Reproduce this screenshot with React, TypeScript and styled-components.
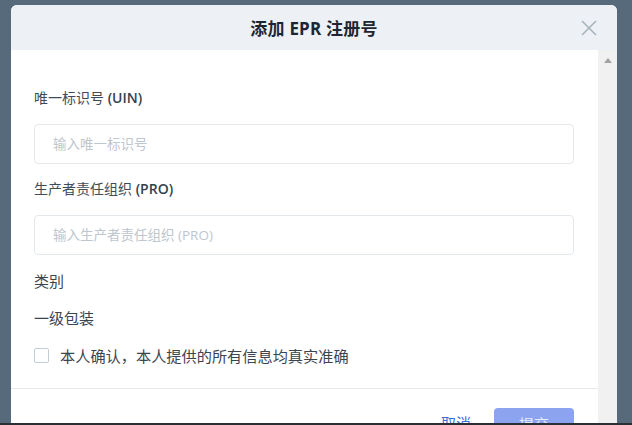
import React, { useState } from 'react';
import styled, { createGlobalStyle } from 'styled-components';

const GlobalStyle = createGlobalStyle`
  html, body {
    margin: 0;
    padding: 0;
    height: 425px;
    overflow: hidden;
    background: #566a7b;
    font-family: "Open Sans", "Noto Sans CJK SC", sans-serif;
  }
  * { box-sizing: border-box; }
`;

const Overlay = styled.div`
  height: 425px;
  padding: 5px 15px 0 11px;
  border-bottom: 2px solid #2a2f33;
`;

const Modal = styled.div`
  width: 606px;
  height: 418px;
  background: #fff;
  border-radius: 6px 6px 0 0;
  overflow: hidden;
  display: flex;
  flex-direction: column;
`;

const Header = styled.div`
  height: 45px;
  flex: none;
  background: #edf1f5;
  display: flex;
  align-items: center;
  justify-content: center;
  position: relative;
`;

const Title = styled.h2`
  margin: 0;
  font-size: 17px;
  font-weight: 700;
  color: #1c2733;
  letter-spacing: 0.2px;
`;

const CloseButton = styled.button`
  position: absolute;
  right: 19px;
  top: 14px;
  width: 18px;
  height: 18px;
  padding: 0;
  border: none;
  background: none;
  cursor: pointer;
`;

const Main = styled.div`
  flex: 1;
  display: flex;
  min-height: 0;
`;

const Content = styled.div`
  flex: 1;
  display: flex;
  flex-direction: column;
`;

const Form = styled.div`
  padding: 38px 24px 0 23px;
  display: flex;
  flex-direction: column;
`;

const Label = styled.label`
  font-size: 14px;
  line-height: 20px;
  color: #3e4c59;
  margin-bottom: 16px;

  b {
    font-weight: 600;
    color: #34414d;
  }
`;

const Input = styled.input`
  height: 40px;
  width: 100%;
  border: 1px solid #e3e8ec;
  border-radius: 4px;
  padding: 0 18px;
  font-family: inherit;
  font-size: 13.5px;
  color: #333;
  margin-bottom: 15px;
  outline: none;

  &::placeholder {
    color: #bec6ce;
  }
`;

const Text = styled.div`
  font-size: 15px;
  line-height: 22px;
  color: #3b4550;
  margin-bottom: 15px;
`;

const CheckRow = styled.label`
  display: flex;
  align-items: center;
  gap: 11px;
  height: 22px;
  font-size: 15.2px;
  color: #3b4550;
  cursor: pointer;
  margin-bottom: 22px;
`;

const Box = styled.span<{ checked: boolean }>`
  width: 15px;
  height: 15px;
  border: 1.5px solid #c3cdd6;
  border-radius: 2px;
  background: ${(p) => (p.checked ? '#5b7fe8' : '#fff')};
`;

const Footer = styled.div`
  border-top: 1px solid #e6eaee;
  padding: 19px 24px 0 0;
  display: flex;
  justify-content: flex-end;
  align-items: flex-start;
  gap: 23px;
`;

const LinkButton = styled.button`
  border: none;
  background: none;
  font-family: inherit;
  font-size: 15px;
  line-height: 20px;
  color: #3a6fd8;
  padding: 0;
  margin-top: 5px;
  cursor: pointer;
`;

const SubmitButton = styled.button`
  width: 80px;
  height: 32px;
  border: none;
  border-radius: 4px;
  background: #8ca4f0;
  color: #e8edfc;
  font-family: inherit;
  font-size: 15px;
  line-height: 20px;
  padding: 6px 0;
  cursor: not-allowed;
`;

const ScrollTrack = styled.div`
  width: 19px;
  background: #f1f1f1;
  display: flex;
  justify-content: center;
  padding-top: 8px;
`;

const ArrowUp = styled.span`
  width: 0;
  height: 0;
  border-left: 4px solid transparent;
  border-right: 4px solid transparent;
  border-bottom: 5px solid #a3a3a3;
`;

export default function App() {
  const [uin, setUin] = useState('');
  const [pro, setPro] = useState('');
  const [confirmed, setConfirmed] = useState(false);

  return (
    <>
      <GlobalStyle />
      <Overlay>
        <Modal>
          <Header>
            <Title>添加 EPR 注册号</Title>
            <CloseButton aria-label="关闭">
              <svg width="18" height="18" viewBox="0 0 18 18">
                <path d="M2 2 L16 16 M16 2 L2 16" stroke="#a6b1bb" strokeWidth="1.5" fill="none" />
              </svg>
            </CloseButton>
          </Header>
          <Main>
            <Content>
              <Form>
                <Label>唯一标识号 <b>(UIN)</b></Label>
                <Input placeholder="输入唯一标识号" value={uin} onChange={(e) => setUin(e.target.value)} />
                <Label>生产者责任组织 <b>(PRO)</b></Label>
                <Input placeholder="输入生产者责任组织 (PRO)" value={pro} onChange={(e) => setPro(e.target.value)} />
                <Text>类别</Text>
                <Text>一级包装</Text>
                <CheckRow onClick={() => setConfirmed(!confirmed)}>
                  <Box checked={confirmed} />
                  本人确认，本人提供的所有信息均真实准确
                </CheckRow>
              </Form>
              <Footer>
                <LinkButton>取消</LinkButton>
                <SubmitButton disabled={!confirmed}>提交</SubmitButton>
              </Footer>
            </Content>
            <ScrollTrack>
              <ArrowUp />
            </ScrollTrack>
          </Main>
        </Modal>
      </Overlay>
    </>
  );
}
